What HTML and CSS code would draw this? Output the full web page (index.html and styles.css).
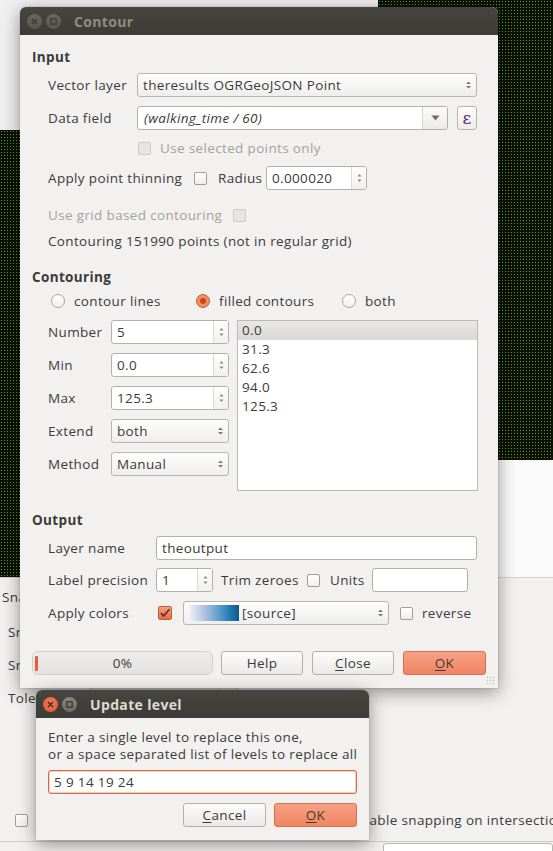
FILE: index.html
```html
<!DOCTYPE html>
<html>
<head>
<meta charset="utf-8">
<title>Contour</title>
<link rel="stylesheet" href="styles.css">
</head>
<body>
<div class="desktop">
  <div class="map map-right"></div>
  <div class="map map-left"></div>
  <div class="white-pane"></div>

  <div class="snap-panel">
    <div class="snap-head">Snapping options</div>
    <div class="snap-rows">
      <div class="snap-row">Snap to</div>
      <div class="snap-row">Snapping mode</div>
      <div class="snap-row">Tolerance <span class="snap-box"><span class="snap-box-sep"></span></span></div>
    </div>
    <div class="snap-foot">
      <span class="cb"></span>
      <span class="snap-inter">Enable snapping on intersection</span>
    </div>
    <div class="snap-bottom"><span class="snap-input"></span></div>
  </div>

  <div class="window contour">
    <div class="titlebar">
      <span class="wbtn inactive"><svg width="15" height="15" viewBox="0 0 15 15"><path d="M5 5l5 5M10 5l-5 5" stroke="#3a3935" stroke-width="1.4" fill="none"/></svg></span>
      <span class="wbtn inactive"><svg width="15" height="15" viewBox="0 0 15 15"><rect x="4.8" y="4.8" width="5.4" height="5.4" stroke="#3a3935" stroke-width="1.2" fill="none"/></svg></span>
      <span class="wtitle inactive-title">Contour</span>
    </div>
    <div class="dlg">
      <div class="gtitle">Input</div>
      <div class="sec">
        <div class="row h24 mt8">
          <span class="lbl lw-in">Vector layer</span>
          <div class="combo w-vec"><span class="ctext">theresults OGRGeoJSON Point</span><span class="ud"><svg width="7" height="12" viewBox="0 0 7 12"><path d="M3.5 2.5L6 5H1z M3.5 9.5L6 7H1z" fill="#7a7874"/></svg></span></div>
        </div>
        <div class="row h24 mt9">
          <span class="lbl lw-in">Data field</span>
          <div class="ecombo w-data"><span class="etext">(walking_time / 60)</span><span class="edrop"><svg width="9" height="6" viewBox="0 0 9 6"><path d="M0.5 0.5h8L4.5 5.5z" fill="#6d6b67"/></svg></span></div>
          <span class="epsbtn">ε</span>
        </div>
        <div class="row h20 mt8">
          <span class="cb dis ml90"></span><span class="dis-text ml9">Use selected points only</span>
        </div>
        <div class="row h24 mt8">
          <span class="lbl lw-thin">Apply point thinning</span>
          <span class="cb"></span>
          <span class="lbl ml11 lw-rad">Radius</span>
          <div class="spin w-rad"><span class="stext">0.000020</span><span class="sbtn"><svg width="7" height="14" viewBox="0 0 7 14"><path d="M3.5 3L5.5 5.5H1.5z M3.5 11L5.5 8.5H1.5z" fill="#8a8884"/></svg></span></div>
        </div>
        <div class="row h20 mt15">
          <span class="lbl lw-grid dis-text">Use grid based contouring</span>
          <span class="cb dis"></span>
        </div>
        <div class="row h20 mt6">
          <span class="lbl">Contouring 151990 points (not in regular grid)</span>
        </div>
      </div>

      <div class="gtitle mt18">Contouring</div>
      <div class="sec">
        <div class="row h20 mt6 radios">
          <span class="ritem w145"><span class="rad"></span><span class="ml9">contour lines</span></span>
          <span class="ritem w146"><span class="rad on"></span><span class="ml9">filled contours</span></span>
          <span class="ritem"><span class="rad"></span><span class="ml9">both</span></span>
        </div>
        <div class="cgrid mt9">
          <div class="ccol">
            <div class="row h24"><span class="lbl lw-c">Number</span><div class="spin w-c"><span class="stext">5</span><span class="sbtn"><svg width="7" height="14" viewBox="0 0 7 14"><path d="M3.5 3L5.5 5.5H1.5z M3.5 11L5.5 8.5H1.5z" fill="#8a8884"/></svg></span></div></div>
            <div class="row h24"><span class="lbl lw-c">Min</span><div class="spin w-c"><span class="stext">0.0</span><span class="sbtn"><svg width="7" height="14" viewBox="0 0 7 14"><path d="M3.5 3L5.5 5.5H1.5z M3.5 11L5.5 8.5H1.5z" fill="#8a8884"/></svg></span></div></div>
            <div class="row h24"><span class="lbl lw-c">Max</span><div class="spin w-c"><span class="stext">125.3</span><span class="sbtn"><svg width="7" height="14" viewBox="0 0 7 14"><path d="M3.5 3L5.5 5.5H1.5z M3.5 11L5.5 8.5H1.5z" fill="#8a8884"/></svg></span></div></div>
            <div class="row h24"><span class="lbl lw-c">Extend</span><div class="combo w-c"><span class="ctext">both</span><span class="ud"><svg width="7" height="12" viewBox="0 0 7 12"><path d="M3.5 2.5L6 5H1z M3.5 9.5L6 7H1z" fill="#7a7874"/></svg></span></div></div>
            <div class="row h24"><span class="lbl lw-c">Method</span><div class="combo w-c"><span class="ctext">Manual</span><span class="ud"><svg width="7" height="12" viewBox="0 0 7 12"><path d="M3.5 2.5L6 5H1z M3.5 9.5L6 7H1z" fill="#7a7874"/></svg></span></div></div>
          </div>
          <div class="levels">
            <div class="lvl sel">0.0</div>
            <div class="lvl">31.3</div>
            <div class="lvl">62.6</div>
            <div class="lvl">94.0</div>
            <div class="lvl">125.3</div>
          </div>
        </div>
      </div>

      <div class="gtitle mt21">Output</div>
      <div class="sec">
        <div class="row h24 mt8">
          <span class="lbl lw-out">Layer name</span>
          <div class="ledit w-layer"><span class="stext">theoutput</span></div>
        </div>
        <div class="row h24 mt8">
          <span class="lbl lw-out">Label precision</span>
          <div class="spin w-prec"><span class="stext">1</span><span class="sbtn"><svg width="7" height="14" viewBox="0 0 7 14"><path d="M3.5 3L5.5 5.5H1.5z M3.5 11L5.5 8.5H1.5z" fill="#8a8884"/></svg></span></div>
          <span class="lbl ml8 lw-trim">Trim zeroes</span>
          <span class="cb"></span>
          <span class="lbl ml10 lw-units">Units</span>
          <div class="ledit w-units"></div>
        </div>
        <div class="row h24 mt9">
          <span class="lbl lw-col">Apply colors</span>
          <span class="cb on"><svg width="12" height="12" viewBox="0 0 12 12"><path d="M2 6.2l2.6 2.8L10.5 2.2" stroke="#4b3b33" stroke-width="1.7" fill="none"/></svg></span>
          <div class="combo w-ramp ml11"><span class="ramp"></span><span class="ctext ramp-text">[source]</span><span class="ud"><svg width="7" height="12" viewBox="0 0 7 12"><path d="M3.5 2.5L6 5H1z M3.5 9.5L6 7H1z" fill="#7a7874"/></svg></span></div>
          <span class="cb ml11"></span>
          <span class="lbl ml9">reverse</span>
        </div>
      </div>

      <div class="row h24 mt26 btnrow">
        <div class="prog"><span class="chunk"></span><span class="ptext">0%</span></div>
        <span class="btn ml8">Help</span>
        <span class="btn ml9"><u>C</u>lose</span>
        <span class="btn ok ml9 w83"><u>O</u>K</span>
      </div>
    </div>
    <span class="grip"></span>
  </div>

  <div class="window update">
    <div class="titlebar">
      <span class="wbtn active-close"><svg width="15" height="15" viewBox="0 0 15 15"><path d="M5 5l5 5M10 5l-5 5" stroke="#3a2a22" stroke-width="1.4" fill="none"/></svg></span>
      <span class="wbtn active-max"><svg width="15" height="15" viewBox="0 0 15 15"><rect x="4.8" y="4.8" width="5.4" height="5.4" stroke="#35342f" stroke-width="1.2" fill="none"/></svg></span>
      <span class="wtitle active-title">Update level</span>
    </div>
    <div class="udlg">
      <p class="utext">Enter a single level to replace this one,<br>or a space separated list of levels to replace all</p>
      <div class="ledit focus mt7"><span class="stext">5 9 14 19 24</span></div>
      <div class="row h24 mt9 uend">
        <span class="btn w83"><u>C</u>ancel</span>
        <span class="btn ok w83 ml8"><u>O</u>K</span>
      </div>
    </div>
  </div>
</div>
</body>
</html>
```

FILE: styles.css
```css
* { box-sizing: border-box; margin: 0; padding: 0; }
html, body { width: 553px; height: 851px; overflow: hidden; }
body {
  font-family: "Open Sans", "Noto Sans", "DejaVu Sans", sans-serif;
  font-size: 13.5px;
  letter-spacing: 0.35px;
  color: #3c3b37;
  background: #efeeed;
}
.desktop { position: relative; width: 553px; height: 851px; overflow: hidden; background: #f0f0f0; }

/* background application */
.map {
  position: absolute;
  background-color: #0b1205;
  background-image: radial-gradient(#6a9a2e 38%, transparent 46%);
  background-size: 3px 3px;
}
.map-right { left: 378px; top: 0; width: 175px; height: 460px; }
.map-left { left: 0; top: 130px; width: 60px; height: 447px; }
.white-pane { position: absolute; left: 380px; top: 460px; width: 173px; height: 118px; background: #fbfbfb; }

.snap-panel {
  position: absolute; left: 0; top: 577px; width: 553px; height: 274px;
  background: #f2f1f0; border-top: 1px solid #d2d0cc;
  display: flex; flex-direction: column;
  white-space: nowrap;
}
.snap-head { height: 16px; line-height: 16px; margin-top: 11px; padding-left: 2px; }
.snap-rows { margin-top: 11px; display: flex; flex-direction: column; }
.snap-row { height: 33px; line-height: 33px; padding-left: 8px; display: flex; align-items: center; }
.snap-box { width: 150px; height: 24px; margin-left: 16px; border: 1px solid #b9b7b2; border-radius: 3px; background: #e4e3e1; display: flex; justify-content: flex-end; }
.snap-box-sep { width: 20px; border-left: 1px solid #c3c1bd; }
.snap-foot { margin-top: 96px; height: 20px; display: flex; align-items: center; padding-left: 15px; }
.snap-inter { margin-left: 325px; white-space: nowrap; flex: none; }
.snap-bottom { margin-top: 12px; border-top: 1px solid #cfcdc9; padding-top: 1px; padding-left: 383px; }
.snap-input { display: block; height: 24px; background: #fff; border: 1px solid #b9b7b2; border-radius: 3px; }

/* windows */
.window {
  position: absolute;
  background: #f2f1f0;
  border-radius: 6px 6px 0 0;
  box-shadow: 0 4px 18px rgba(0,0,0,0.42), 0 0 0 1px rgba(0,0,0,0.06);
}
.contour { left: 20px; top: 7px; width: 478px; height: 681px; }
.update { left: 36px; top: 690px; width: 333px; height: 150px; }

.titlebar {
  height: 28px;
  background: linear-gradient(#46453f, #3c3b37);
  border-radius: 6px 6px 0 0;
  display: flex; align-items: center;
  padding-left: 7px;
}
.wbtn { width: 15px; height: 15px; border-radius: 50%; display: flex; margin-right: 4px; }
.wbtn.inactive { background: linear-gradient(#686762, #575651); }
.active-close { background: radial-gradient(circle at 50% 40%, #f57d55, #e0532a); }
.active-max { background: linear-gradient(#86857f, #6c6b66); }
.wtitle { margin-left: 9px; font-weight: bold; font-size: 14px; white-space: nowrap; }
.inactive-title { color: #8e8c88; }
.active-title { color: #dfdbd2; }

.dlg { padding: 14px 12px 13px 12px; display: flex; flex-direction: column; }
.gtitle { font-weight: bold; height: 16px; line-height: 16px; }
.sec { padding-left: 16px; display: flex; flex-direction: column; }
.row { display: flex; align-items: center; flex: none; white-space: nowrap; }
.h24 { height: 24px; }
.h20 { height: 20px; }
.mt6 { margin-top: 6px; } .mt7 { margin-top: 7px; } .mt8 { margin-top: 8px; } .mt9 { margin-top: 9px; }
.mt15 { margin-top: 15px; } .mt18 { margin-top: 18px; } .mt21 { margin-top: 21px; } .mt26 { margin-top: 26px; }
.ml8 { margin-left: 8px; } .ml9 { margin-left: 9px; } .ml10 { margin-left: 10px; } .ml11 { margin-left: 11px; }
.ml90 { margin-left: 90px; }

.lbl { white-space: nowrap; flex: none; }
.lw-in { width: 89px; }
.lw-thin { width: 146px; }
.lw-rad { width: 48px; }
.lw-grid { width: 185px; }
.lw-c { width: 63px; }
.lw-out { width: 108px; }
.lw-col { width: 110px; }
.lw-trim { width: 86px; }
.lw-units { width: 42px; }
.dis-text { color: #a3a19d; }

/* widgets */
.combo {
  height: 24px; border: 1px solid #b7b5b0; border-radius: 3px;
  background: linear-gradient(#fefefe, #efeeed);
  display: flex; align-items: center; padding-left: 5px; flex: none;
}
.ctext { flex: 1; white-space: nowrap; overflow: hidden; }
.ud { width: 16px; display: flex; justify-content: center; }
.w-vec { width: 340px; }
.w-c { width: 118px; }
.w-ramp { width: 206px; padding-left: 5px; }
.ramp { width: 50px; height: 16px; background: linear-gradient(90deg, #f4f1f8, #a6bddb 35%, #3f8ec3 70%, #045a8d); flex: none; }
.ramp-text { margin-left: 3px; }

.ecombo {
  height: 24px; border: 1px solid #b3b1ac; border-radius: 3px; background: #fff;
  display: flex; align-items: stretch; flex: none;
}
.w-data { width: 311px; }
.etext { flex: 1; font-style: italic; padding-left: 6px; display: flex; align-items: center; }
.edrop { width: 25px; border-left: 1px solid #d5d3cf; background: linear-gradient(#fbfbfa, #ecebea); border-radius: 0 2px 2px 0; display: flex; align-items: center; justify-content: center; }
.epsbtn {
  margin-left: 9px; width: 20px; height: 24px; flex: none;
  border: 1px solid #b7b5b0; border-radius: 3px; background: linear-gradient(#fdfdfc, #edecea);
  display: flex; align-items: center; justify-content: center;
  color: #5b2f73; font-family: "DejaVu Serif", serif; font-size: 17px; line-height: 1; letter-spacing: 0;
}

.ledit, .spin {
  height: 24px; border: 1px solid #b3b1ac; border-radius: 3px; background: #fff;
  display: flex; align-items: stretch; flex: none;
}
.stext { flex: 1; padding-left: 5px; display: flex; align-items: center; white-space: nowrap; }
.sbtn { width: 15px; border-left: 1px solid #dedcd8; background: linear-gradient(#fdfdfd, #f1f0ef); border-radius: 0 2px 2px 0; display: flex; align-items: center; justify-content: center; }
.w-rad { width: 101px; }
.w-layer { width: 321px; }
.w-prec { width: 57px; }
.w-units { width: 96px; }
.ledit.focus { border-color: #e2673b; box-shadow: inset 0 0 0 0.5px #f0a080; }

.cb {
  width: 13px; height: 13px; flex: none;
  border: 1px solid #9f9d98; border-radius: 2px;
  background: linear-gradient(#ffffff, #efeeed);
  display: flex; align-items: center; justify-content: center;
}
.cb.dis { border-color: #cdcbc7; background: #e6e5e3; }
.cb.on { width: 14px; height: 14px; background: linear-gradient(#f59f7c, #ea6d41); border-color: #c65c33; }

.radios { padding-left: 3px; }
.ritem { display: flex; align-items: center; flex: none; }
.w145 { width: 145px; }
.w146 { width: 146px; }
.rad { width: 14px; height: 14px; border-radius: 50%; border: 1px solid #a8a6a1; background: linear-gradient(#ffffff, #f1f0ef); flex: none; }
.rad.on { border-color: #c2582c; background: radial-gradient(circle, #c9491a 0, #c9491a 2.6px, #f08b60 3.4px, #f39b74 100%); }

.cgrid { display: flex; align-items: flex-start; }
.ccol { display: flex; flex-direction: column; gap: 9px; }
.levels {
  margin-left: 8px; width: 241px; height: 171px; background: #fff;
  border: 1px solid #bdbbb7; display: flex; flex-direction: column;
}
.lvl { height: 19px; line-height: 19px; padding-left: 4px; }
.lvl.sel { background: linear-gradient(#e8e7e5, #dad9d7); }

.btn {
  width: 82px; height: 24px; flex: none;
  border: 1px solid #b3b1ac; border-radius: 3px;
  background: linear-gradient(#fcfcfb, #eae9e7);
  display: flex; align-items: center; justify-content: center;
}
.btn u { text-decoration: underline; text-underline-offset: 2px; }
.btn.ok { background: linear-gradient(#f7a183, #f08562); border-color: #d4714d; }
.w83 { width: 83px; }
.prog {
  width: 181px; height: 24px; position: relative; flex: none;
  border: 1px solid #d2d0cc; border-radius: 6px;
  background: linear-gradient(#eeedeb, #e3e2e0);
  display: flex; align-items: center; justify-content: center;
}
.chunk { position: absolute; left: 2px; top: 4px; width: 3px; height: 15px; background: #e4603a; border-radius: 1px; }
.grip {
  position: absolute; right: 3px; bottom: 3px; width: 9px; height: 9px;
  background-image: radial-gradient(#c9c7c3 40%, transparent 50%);
  background-size: 3px 3px;
}

.udlg { padding: 11px 12px 13px 12px; display: flex; flex-direction: column; }
.utext { line-height: 17px; white-space: nowrap; }
.uend { justify-content: flex-end; }
```
